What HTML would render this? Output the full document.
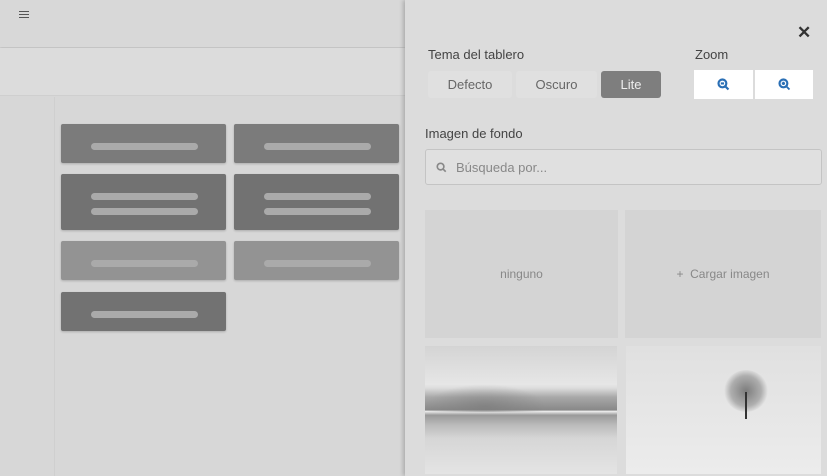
<!DOCTYPE html>
<html><head><meta charset="utf-8"><style>
*{box-sizing:border-box;margin:0;padding:0}
body{width:827px;height:476px;overflow:hidden;background:#d7d7d7;font-family:"Liberation Sans",sans-serif;position:relative}
.a{position:absolute}
.card{position:absolute;width:165px;border-radius:2px;box-shadow:0 1px 2px rgba(0,0,0,.2)}
.bar{position:absolute;left:30px;width:107px;height:7px;border-radius:4px;background:#aaa}
.btn{position:absolute;top:71px;height:27px;background:#e0e0e0;border-radius:3px;color:#666;font-size:13px;text-align:center;line-height:27px}
.zb{position:absolute;top:70px;height:29px;background:#fff;display:flex;align-items:center;justify-content:center}
.lbl{position:absolute;font-size:13px;color:#444}
.tile{position:absolute;top:210px;height:128px;background:#d4d4d4;color:#888;font-size:12px;display:flex;align-items:center;justify-content:center}
</style></head><body>
<div class="a" style="left:0;top:0;width:405px;height:47px;background:#d8d8d8;box-shadow:0 1px 3px rgba(0,0,0,.15)"></div>
<div class="a" style="left:19px;top:11px;width:10px;height:1px;background:#555;box-shadow:0 3px 0 #555,0 6px 0 #555"></div>
<div class="a" style="left:0;top:48px;width:405px;height:48px;background:#dcdcdc;border-bottom:1px solid #cfcfcf"></div>
<div class="a" style="left:54px;top:97px;width:1px;height:379px;background:#cfcfcf"></div>
<div class="card" style="left:61px;top:124px;height:39px;background:#7b7b7b"><div class="bar" style="top:19px"></div></div>
<div class="card" style="left:234px;top:124px;height:39px;background:#7b7b7b"><div class="bar" style="top:19px"></div></div>
<div class="card" style="left:61px;top:174px;height:56px;background:#727272"><div class="bar" style="top:19px"></div><div class="bar" style="top:34px"></div></div>
<div class="card" style="left:234px;top:174px;height:56px;background:#727272"><div class="bar" style="top:19px"></div><div class="bar" style="top:34px"></div></div>
<div class="card" style="left:61px;top:241px;height:39px;background:#939393"><div class="bar" style="top:19px"></div></div>
<div class="card" style="left:234px;top:241px;height:39px;background:#939393"><div class="bar" style="top:19px"></div></div>
<div class="card" style="left:61px;top:292px;height:39px;background:#727272"><div class="bar" style="top:19px"></div></div>

<div class="a" style="left:405px;top:0;width:422px;height:476px;background:#dcdcdc;box-shadow:-2px 0 4px rgba(0,0,0,.2)"></div>
<div class="a" style="left:797px;top:23px;font-size:17px;font-weight:bold;color:#333">✕</div>
<div class="lbl" style="left:428px;top:47px">Tema del tablero</div>
<div class="btn" style="left:428px;width:84px">Defecto</div>
<div class="btn" style="left:516px;width:81px">Oscuro</div>
<div class="btn" style="left:601px;width:60px;background:#7e7e7e;color:#eee">Lite</div>
<div class="lbl" style="left:695px;top:47px">Zoom</div>
<div class="zb" style="left:694px;width:59px"><svg width="13" height="13" viewBox="0 0 12 12"><circle cx="5" cy="5" r="3.6" fill="none" stroke="#2a6fb5" stroke-width="2"/><path d="M3.5 5h3M7.6 7.6l3 3" stroke="#2a6fb5" stroke-width="2"/></svg></div>
<div class="zb" style="left:755px;width:58px"><svg width="13" height="13" viewBox="0 0 12 12"><circle cx="5" cy="5" r="3.6" fill="none" stroke="#2a6fb5" stroke-width="2"/><path d="M3.5 5h3M5 3.5v3M7.6 7.6l3 3" stroke="#2a6fb5" stroke-width="1.7"/></svg></div>
<div class="lbl" style="left:425px;top:126px">Imagen de fondo</div>
<div class="a" style="left:425px;top:149px;width:397px;height:36px;border:1px solid #c4c4c4;border-radius:3px;background:#e0e0e0"></div>
<svg class="a" style="left:436px;top:162px" width="11" height="11" viewBox="0 0 12 12"><circle cx="5" cy="5" r="3.6" fill="none" stroke="#888" stroke-width="1.8"/><path d="M7.6 7.6l3 3" stroke="#888" stroke-width="1.8"/></svg>
<div class="a" style="left:456px;top:160px;font-size:13px;color:#888">Búsqueda por...</div>
<div class="tile" style="left:425px;width:193px">ninguno</div>
<div class="tile" style="left:625px;width:196px">+&nbsp;&nbsp;Cargar imagen</div>
<div class="a" style="left:425px;top:346px;width:192px;height:128px;background:linear-gradient(#d4d4d4 0,#e6e6e6 30%,#dcdcdc 33%,#a8a8a8 40%,#888 50%,#eee 51%,#9a9a9a 54%,#bcbcbc 62%,#d6d6d6 72%,#e4e4e4 100%)"></div>
<div class="a" style="left:425px;top:384px;width:120px;height:28px;background:radial-gradient(ellipse at 50% 80%,rgba(120,120,120,.6),rgba(200,200,200,0) 70%)"></div>
<div class="a" style="left:626px;top:346px;width:195px;height:128px;background:linear-gradient(#e0e0e0,#ececec)"></div>
<div class="a" style="left:724px;top:370px;width:44px;height:42px;border-radius:50%;background:radial-gradient(circle,rgba(90,90,90,.75) 0,rgba(120,120,120,.5) 50%,rgba(200,200,200,0) 72%)"></div>
<div class="a" style="left:745px;top:392px;width:2px;height:27px;background:#333"></div>
</body></html>
